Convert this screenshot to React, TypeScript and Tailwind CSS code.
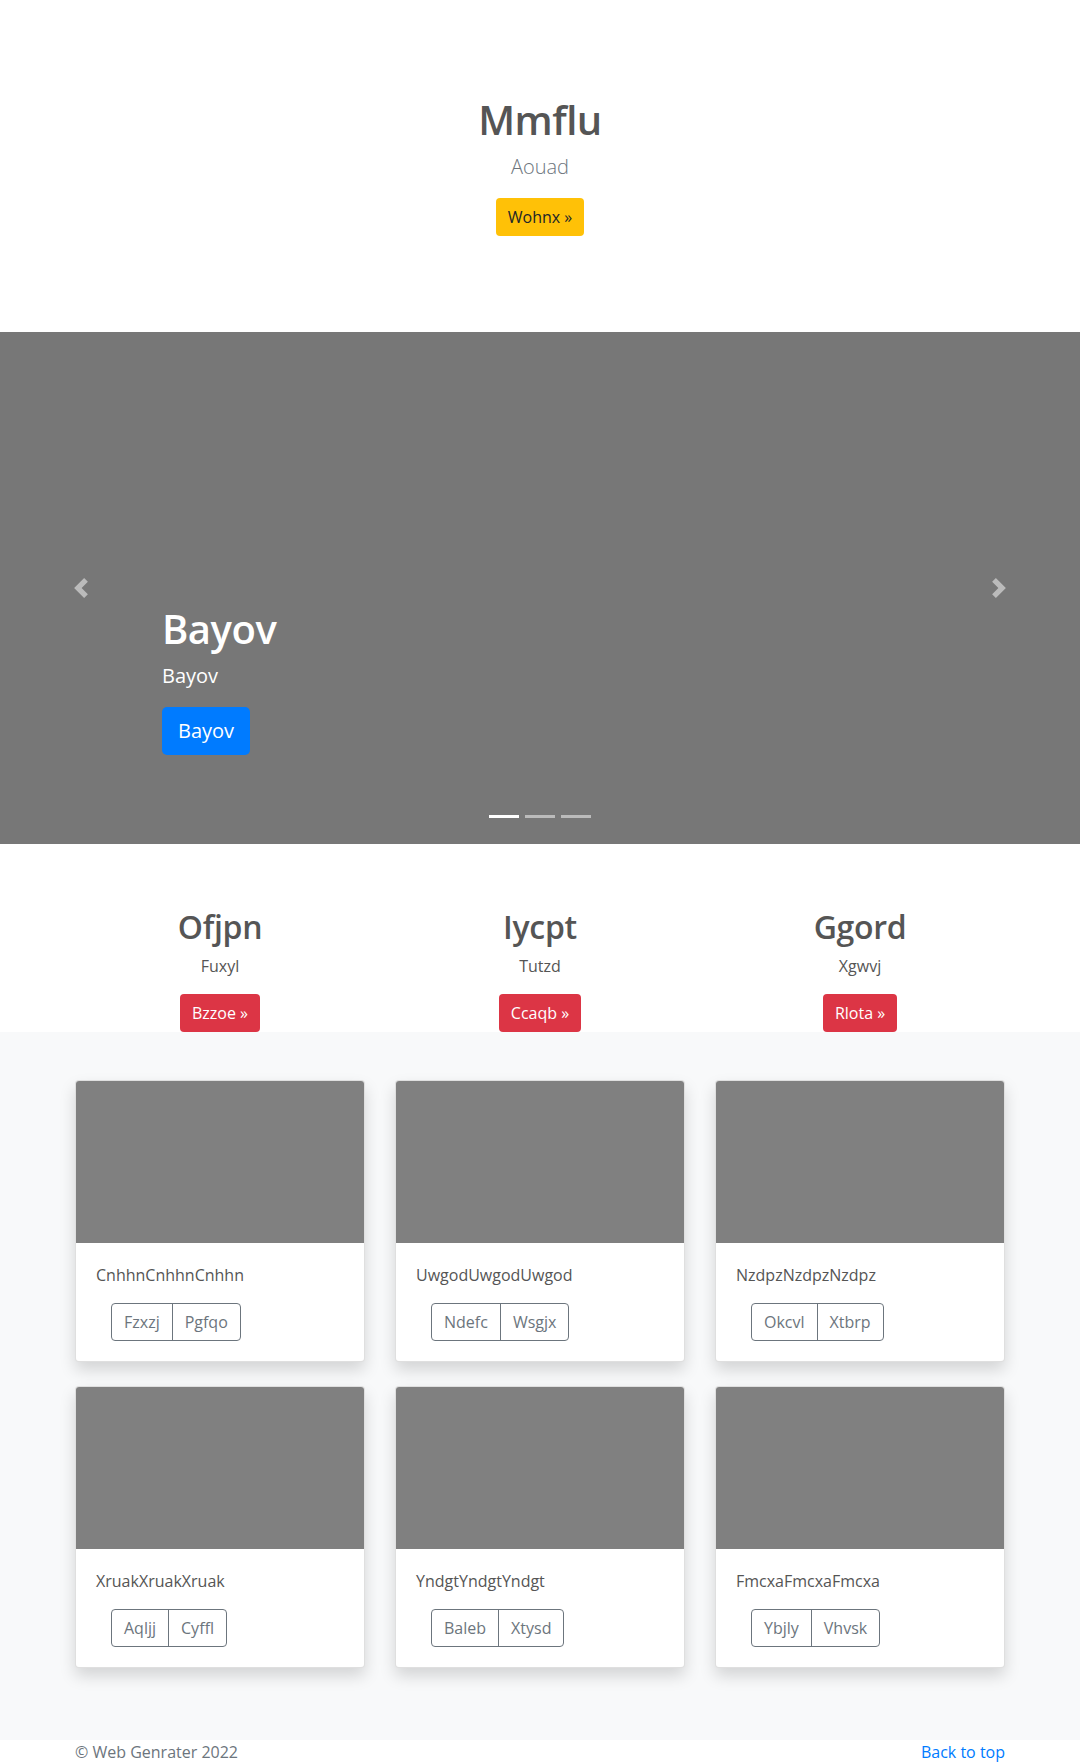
import React from "react";

const cards = [
  { t: "CnhhnCnhhnCnhhn", a: "Fzxzj", b: "Pgfqo" },
  { t: "UwgodUwgodUwgod", a: "Ndefc", b: "Wsgjx" },
  { t: "NzdpzNzdpzNzdpz", a: "Okcvl", b: "Xtbrp" },
  { t: "XruakXruakXruak", a: "Aqljj", b: "Cyffl" },
  { t: "YndgtYndgtYndgt", a: "Baleb", b: "Xtysd" },
  { t: "FmcxaFmcxaFmcxa", a: "Ybjly", b: "Vhvsk" },
];

const marketing = [
  { h: "Ofjpn", p: "Fuxyl", b: "Bzzoe »" },
  { h: "Iycpt", p: "Tutzd", b: "Ccaqb »" },
  { h: "Ggord", p: "Xgwvj", b: "Rlota »" },
];

function Chevron({ dir }: { dir: "prev" | "next" }) {
  return (
    <svg width="20" height="20" viewBox="0 0 8 8" fill="#fff" className="opacity-50">
      {dir === "prev" ? (
        <path d="M5.25 0l-4 4 4 4 1.5-1.5L4.25 4l2.5-2.5L5.25 0z" />
      ) : (
        <path d="M2.75 0l-1.5 1.5L3.75 4l-2.5 2.5L2.75 8l4-4-4-4z" />
      )}
    </svg>
  );
}

export default function App() {
  return (
    <div className="font-['Open_Sans','Noto_Sans',sans-serif] text-[#555] bg-white w-[1080px]">
      {/* Header */}
      <section className="flex flex-col items-center text-center pt-[96px] pb-[96px]">
        <h1 className="text-[40px] leading-[48px] font-semibold text-[#555] mb-2 tracking-[-0.5px]">Mmflu</h1>
        <p className="text-[20px] leading-[30px] font-light text-[#6c757d] mb-4">Aouad</p>
        <a className="inline-flex items-center h-[38px] px-3 rounded bg-[#ffc107] text-[#212529] text-[16px] leading-6">
          Wohnx »
        </a>
      </section>

      {/* Carousel */}
      <div className="relative h-[512px] bg-[#777]">
        <div className="absolute left-0 top-0 bottom-0 w-[15%] flex items-center justify-center">
          <Chevron dir="prev" />
        </div>
        <div className="absolute right-0 top-0 bottom-0 w-[15%] flex items-center justify-center">
          <Chevron dir="next" />
        </div>
        <div className="absolute left-[162px] top-[273px] flex flex-col items-start text-white">
          <h1 className="text-[40px] leading-[48px] font-semibold mb-2 tracking-[-0.5px]">Bayov</h1>
          <p className="text-[20px] leading-[30px] mb-4">Bayov</p>
          <a className="inline-flex items-center h-[48px] px-4 rounded-[5px] bg-[#007bff] text-white text-[20px] leading-[30px]">
            Bayov
          </a>
        </div>
        <div className="absolute bottom-[26px] left-0 right-0 flex justify-center gap-[6px]">
          <span className="w-[30px] h-[3px] bg-white" />
          <span className="w-[30px] h-[3px] bg-white opacity-50" />
          <span className="w-[30px] h-[3px] bg-white opacity-50" />
        </div>
      </div>

      {/* Marketing */}
      <div className="w-[960px] mx-auto mt-[64px] grid grid-cols-3">
        {marketing.map((m) => (
          <div key={m.h} className="flex flex-col items-center text-center px-[15px]">
            <h2 className="text-[32px] leading-[38px] font-semibold text-[#555] mb-2 tracking-[-0.3px]">{m.h}</h2>
            <p className="text-[16px] leading-6 mb-4">{m.p}</p>
            <a className="inline-flex items-center h-[38px] px-3 rounded bg-[#dc3545] text-white text-[16px] leading-6">
              {m.b}
            </a>
          </div>
        ))}
      </div>

      {/* Album */}
      <div className="bg-[#f8f9fa] pt-12 pb-[72px]">
        <div className="w-[930px] mx-auto grid grid-cols-3 gap-x-[30px] gap-y-[24px]">
          {cards.map((c) => (
            <div
              key={c.t}
              className="bg-white border border-[rgba(0,0,0,0.125)] rounded overflow-hidden shadow-[0_8px_16px_rgba(0,0,0,0.15)]"
            >
              <div className="w-full h-[162px] bg-[#808080]" />
              <div className="p-5">
                <p className="text-[16px] leading-6 mb-4 text-[#555]">{c.t}</p>
                <div className="ml-[15px] inline-flex border border-[#6c757d] rounded text-[#6c757d] text-[16px] leading-6">
                  <span className="h-[36px] px-3 flex items-center border-r border-[#6c757d]">{c.a}</span>
                  <span className="h-[36px] px-3 flex items-center">{c.b}</span>
                </div>
              </div>
            </div>
          ))}
        </div>
      </div>

      {/* Footer */}
      <footer className="w-[930px] mx-auto flex justify-between text-[16px] leading-6 pb-12">
        <p className="text-[#6c757d]">© Web Genrater 2022</p>
        <a className="text-[#007bff]">Back to top</a>
      </footer>
    </div>
  );
}
